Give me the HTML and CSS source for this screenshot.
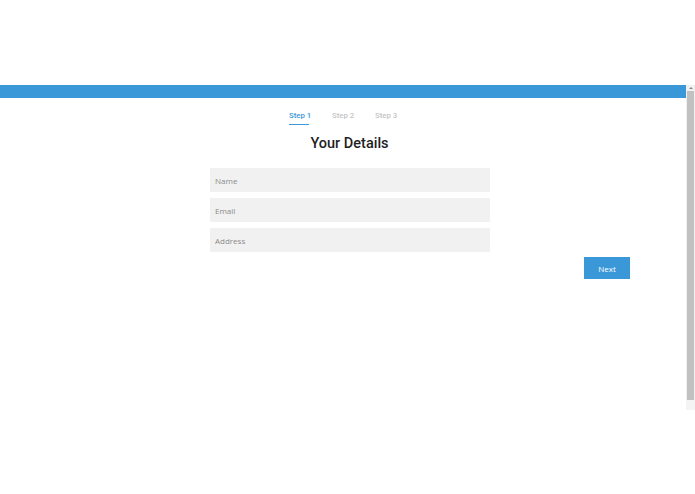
FILE: index.html
```html
<!DOCTYPE html>
<html>
<head>
<meta charset="utf-8">
<link rel="stylesheet" href="styles.css">
</head>
<body>
<div class="spacer"></div>
<div class="frame">
  <div class="content">
    <div class="topbar"></div>
    <nav class="steps">
      <span class="step active">Step 1</span>
      <span class="step">Step 2</span>
      <span class="step">Step 3</span>
    </nav>
    <h1 class="title">Your Details</h1>
    <div class="form">
      <div class="fields">
        <div class="field">Name</div>
        <div class="field">Email</div>
        <div class="field">Address</div>
      </div>
      <div class="actions">
        <button class="next">Next</button>
      </div>
    </div>
  </div>
  <div class="scrollbar">
    <div class="arrow"></div>
    <div class="thumb"></div>
    <div class="track-end"></div>
  </div>
</div>
</body>
</html>
```

FILE: styles.css
```css
html, body {
  margin: 0;
  padding: 0;
  background: #fff;
}
.spacer {
  height: 85px;
}
.frame {
  display: flex;
  height: 325px;
  width: 695px;
}
.content {
  width: 686px;
  display: flex;
  flex-direction: column;
}
.topbar {
  height: 13px;
  background: #3a98d8;
}
.steps {
  display: flex;
  justify-content: center;
  gap: 23px;
  margin-top: 13px;
  margin-left: -2px;
}
.step {
  font-family: Roboto, sans-serif;
  font-size: 7.8px;
  font-weight: 500;
  color: #c4c4c4;
  width: 20px;
  text-align: center;
  white-space: nowrap;
  line-height: 10px;
  padding-bottom: 3px;
  border-bottom: 1px solid transparent;
}
.step.active {
  color: #3a98d8;
  border-bottom-color: #3a98d8;
}
.title {
  font-family: Roboto, sans-serif;
  font-weight: 500;
  font-size: 14.5px;
  color: #1f1f1f;
  text-align: center;
  margin: 10px 0 0 13px;
  line-height: 18px;
}
.form {
  margin-left: 210px;
  margin-top: 15px;
  width: 420px;
  display: flex;
  flex-direction: column;
}
.fields {
  display: flex;
  flex-direction: column;
  gap: 6px;
  width: 280px;
}
.field {
  height: 24px;
  background: #f1f1f1;
  font-family: "Open Sans", sans-serif;
  font-size: 8px;
  color: #8a8a8a;
  padding-left: 5px;
  display: flex;
  align-items: center;
}
.actions {
  display: flex;
  justify-content: flex-end;
  margin-top: 5px;
}
.next {
  width: 46px;
  height: 22px;
  border: none;
  background: #3a98d8;
  color: #fff;
  font-family: "Open Sans", sans-serif;
  font-size: 8px;
  padding: 0;
}
.scrollbar {
  width: 9px;
  display: flex;
  flex-direction: column;
  background: #f1f1f1;
}
.arrow {
  height: 6px;
  display: flex;
  justify-content: center;
  align-items: center;
}
.arrow::before {
  content: "";
  border-left: 2px solid transparent;
  border-right: 2px solid transparent;
  border-bottom: 2px solid #888;
}
.thumb {
  height: 309px;
  margin: 0 1px;
  background: #c1c1c1;
}
.track-end {
  flex: 1;
  background: #f4f4f4;
}
```
